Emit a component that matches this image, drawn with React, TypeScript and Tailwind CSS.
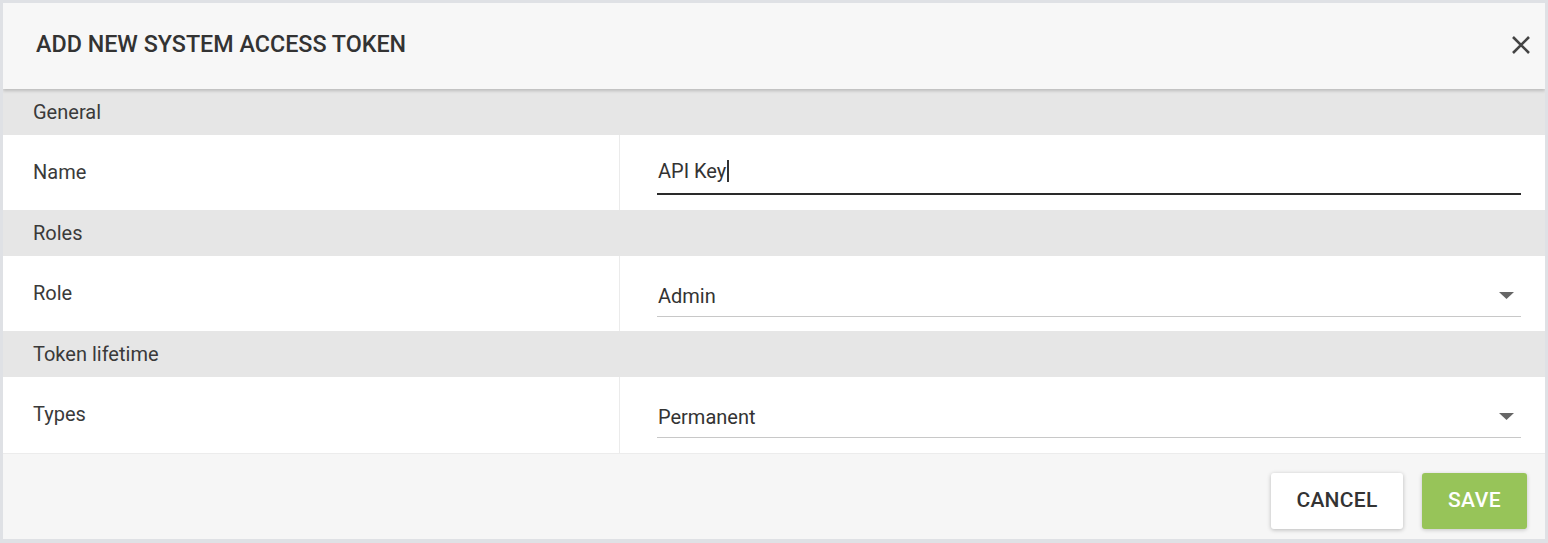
import React from "react";

const font = { fontFamily: "Roboto, 'Noto Sans', sans-serif" };

function Section({ title }: { title: string }) {
  return (
    <div className="h-[46px] bg-[#e6e6e6] flex items-center pl-[30px] pb-[1px] text-[20px] text-[#3a3a3a]">
      {title}
    </div>
  );
}

function Row({ label, children, h = "h-[75px]" }: { label: string; children: React.ReactNode; h?: string }) {
  return (
    <div className={`flex ${h} bg-white`}>
      <div className="w-[617px] shrink-0 flex items-center pl-[30px] pb-[2px] text-[20px] text-[#3a3a3a] border-r border-[#ebebeb]">
        {label}
      </div>
      <div className="flex-1 pl-[37px] pr-[24px] relative">{children}</div>
    </div>
  );
}

function Select({ value }: { value: string }) {
  return (
    <div className="absolute left-[37px] right-[24px] top-0 bottom-0">
      <div className="absolute left-[1px] top-[25px] text-[20px] leading-[30px] text-[#333]">{value}</div>
      <svg className="absolute right-[7px] top-[36px]" width="15" height="7" viewBox="0 0 15 7">
        <path d="M0 0 L15 0 L7.5 7 Z" fill="#666" />
      </svg>
      <div className="absolute left-0 right-0 top-[60px] h-px bg-[#c8c8c8]" />
    </div>
  );
}

export default function App() {
  return (
    <div className="w-[1548px] h-[543px] bg-[#dfe1e5] pt-[3px] px-[3px] pb-[4px]" style={font}>
      <div className="w-full h-full flex flex-col bg-[#f7f7f7] overflow-hidden">
        <div className="h-[86px] shrink-0 flex items-center justify-between pl-[33px] pr-[14px] pb-[3px] bg-[#f7f7f7] relative z-10 shadow-[0_2px_3px_rgba(0,0,0,0.18)]">
          <div className="text-[23.3px] font-medium text-[#333]">ADD NEW SYSTEM ACCESS TOKEN</div>
          <svg width="20" height="20" viewBox="0 0 20 20">
            <path d="M2 2 L18 18 M18 2 L2 18" stroke="#444" strokeWidth="2.6" strokeLinecap="butt" />
          </svg>
        </div>
        <Section title="General" />
        <Row label="Name">
          <div className="absolute left-[37px] right-[24px] top-0 bottom-0">
            <div className="absolute left-[1px] top-[21px] text-[20px] leading-[30px] text-[#333] flex items-center">
              API Key<span className="inline-block w-[1.5px] h-[22px] bg-[#333] ml-[1px]" />
            </div>
            <div className="absolute left-0 right-0 top-[58px] h-[2px] bg-[#2a2a2a]" />
          </div>
        </Row>
        <Section title="Roles" />
        <Row label="Role">
          <Select value="Admin" />
        </Row>
        <Section title="Token lifetime" />
        <Row label="Types" h="h-[76px]">
          <Select value="Permanent" />
        </Row>
        <div className="flex-1 border-t border-[#ececec] bg-[#f6f6f6] flex items-start justify-end gap-[19px] pr-[18px] pt-[19px]">
          <button className="w-[132px] h-[56px] bg-white rounded-[3px] shadow-[0_1px_4px_rgba(0,0,0,0.25)] text-[21px] font-medium tracking-[0.3px] text-[#333]">
            CANCEL
          </button>
          <button className="w-[105px] h-[56px] bg-[#97c459] rounded-[3px] shadow-[0_1px_4px_rgba(0,0,0,0.2)] text-[21px] font-medium tracking-[0.5px] text-white">
            SAVE
          </button>
        </div>
      </div>
    </div>
  );
}
